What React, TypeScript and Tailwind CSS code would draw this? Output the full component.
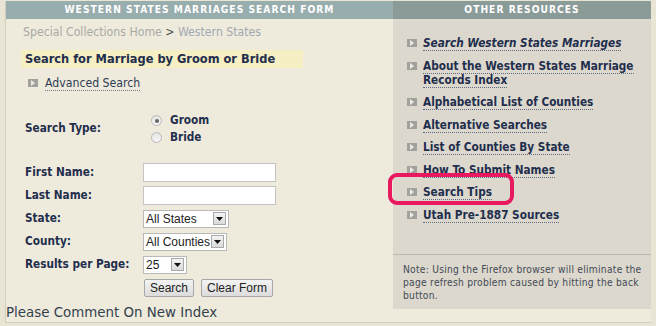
import React from "react";

const NAVY = "text-[#1f2e4c]";
const COND = "font-['DejaVu_Sans_Condensed','DejaVu_Sans',Tahoma,sans-serif]";

const LINKS: { label: string[]; italic?: boolean }[] = [
  { label: ["Search Western States Marriages"], italic: true },
  { label: ["About the Western States Marriage", "Records Index"] },
  { label: ["Alphabetical List of Counties"] },
  { label: ["Alternative Searches"] },
  { label: ["List of Counties By State"] },
  { label: ["How To Submit Names"] },
  { label: ["Search Tips"] },
  { label: ["Utah Pre-1887 Sources"] },
];

function Bullet() {
  return (
    <span className="mt-[3px] flex h-[8px] w-[10px] shrink-0 items-center justify-center bg-[#a3a19b]">
      <svg width="4" height="6" viewBox="0 0 4 6">
        <path d="M0 0 L4 3 L0 6 Z" fill="#ecebe6" />
      </svg>
    </span>
  );
}

function Select({ value, width }: { value: string; width: number }) {
  return (
    <div
      className="flex h-[18px] items-center justify-between border border-[#b9b9b9] bg-white pl-[2px] pr-[2px]"
      style={{ width }}
    >
      <span className="whitespace-nowrap font-['Liberation_Sans',Arial,sans-serif] text-[12px] leading-none text-[#222]">
        {value}
      </span>
      <span className="flex h-[13px] w-[13px] shrink-0 items-center justify-center border border-[#a9a9a9] bg-gradient-to-b from-[#f4f4f4] to-[#d9d9d9]">
        <svg width="7" height="4" viewBox="0 0 7 4">
          <path d="M0 0 H7 L3.5 4 Z" fill="#111" />
        </svg>
      </span>
    </div>
  );
}

function Button({ children, width }: { children: React.ReactNode; width: number }) {
  return (
    <div
      className="flex h-[18px] items-center justify-center rounded-[2px] border border-[#a7a7a7] bg-gradient-to-b from-[#f3f3f3] to-[#dcdcdc] font-['Liberation_Sans',Arial,sans-serif] text-[12px] leading-none text-[#222]"
      style={{ width }}
    >
      {children}
    </div>
  );
}

function Radio({ checked }: { checked?: boolean }) {
  return (
    <span className="flex h-[11px] w-[11px] items-center justify-center rounded-full border border-[#b8b8b8] bg-gradient-to-b from-[#e4e4e4] to-[#f8f8f8]">
      {checked && <span className="h-[4px] w-[4px] rounded-full bg-[#666]" />}
    </span>
  );
}

function Row({ label, children }: { label: string; children: React.ReactNode }) {
  return (
    <div className="flex h-[23px] items-center">
      <div className={`w-[118px] whitespace-nowrap ${COND} text-[11.7px] font-bold ${NAVY}`}>{label}</div>
      {children}
    </div>
  );
}

export default function App() {
  return (
    <div className="h-[326px] w-[656px] overflow-hidden bg-[#e9e5d5] pl-[5px] pt-[1px] font-['DejaVu_Sans',Verdana,sans-serif]">
      <div className="relative w-[646px] border-b border-l border-[#d2cebd] bg-[#efebdc]">
        {/* header */}
        <div className={`flex h-[18px] ${COND} text-[10.2px] font-bold uppercase leading-[18px] tracking-[0.1em] text-white`}>
          <div className="w-[387px] bg-[#98adad] text-center">Western States Marriages Search Form</div>
          <div className="flex-1 bg-[#8b9b98] text-center">Other Resources</div>
        </div>

        <div className="flex items-start">
          {/* left column */}
          <div className="w-[387px]">
            <div className={`pl-[17px] pt-[6px] ${COND} text-[12.2px] leading-[14px] text-[#a8a9a5]`}>
              Special Collections Home <span className="text-[#4a4f5a]">&gt;</span>{" "}
              <span className="text-[#a2a8b3]">Western States</span>
            </div>

            <div
              className={`ml-[15px] mt-[11px] h-[18px] w-[282px] bg-[#f6efc4] pl-[4px] ${COND} whitespace-nowrap text-[12.7px] font-bold leading-[18px] ${NAVY}`}
            >
              Search for Marriage by Groom or Bride
            </div>

            <div className="ml-[22px] mt-[8px] flex items-start gap-[7px]">
              <Bullet />
              <span className={`border-b border-dotted border-[#6b7890] ${COND} text-[12.2px] leading-[14px] text-[#2d3b57]`}>
                Advanced Search
              </span>
            </div>

            <div className="ml-[19px] mt-[24px]">
              <div className="flex items-center">
                <div className={`w-[119px] ${COND} text-[11.7px] font-bold ${NAVY}`}>Search Type:</div>
                <div className="flex flex-col gap-[6px] pl-[7px]">
                  <div className="flex items-center gap-[8px]">
                    <Radio checked />
                    <span className={`${COND} text-[11.7px] font-bold leading-[11px] ${NAVY}`}>Groom</span>
                  </div>
                  <div className="flex items-center gap-[8px]">
                    <Radio />
                    <span className={`${COND} text-[11.7px] font-bold leading-[11px] ${NAVY}`}>Bride</span>
                  </div>
                </div>
              </div>

              <div className="mt-[18px]">
                <Row label="First Name:">
                  <div className="h-[19px] w-[133px] border border-[#c4c4c4] bg-white" />
                </Row>
                <Row label="Last Name:">
                  <div className="h-[19px] w-[133px] border border-[#c4c4c4] bg-white" />
                </Row>
                <Row label="State:">
                  <Select value="All States" width={86} />
                </Row>
                <Row label="County:">
                  <Select value="All Counties" width={84} />
                </Row>
                <Row label="Results per Page:">
                  <Select value="25" width={44} />
                </Row>
                <div className="flex h-[23px] items-center gap-[7px] pl-[119px]">
                  <Button width={50}>Search</Button>
                  <Button width={72}>Clear Form</Button>
                </div>
              </div>
            </div>

            <div className="pb-[1px] pt-[6px] text-[13.4px] leading-[16px] text-[#33404e]">Please Comment On New Index</div>
          </div>

          {/* right column */}
          <div className="h-[290px] flex-1 bg-[#dcd8ce]">
            <ul className="h-[236px] border-b border-[#bdb9ae] pl-[14px] pt-[17px]">
              {LINKS.map((l) => (
                <li key={l.label[0]} className="mb-[8.5px] flex items-start gap-[6px]">
                  <Bullet />
                  <span className={`${COND} text-[11.7px] font-bold leading-[14px] ${NAVY} ${l.italic ? "italic" : ""}`}>
                    {l.label.map((t, i) => (
                      <React.Fragment key={i}>
                        <span className="border-b border-dotted border-[#5d6a82]">{t}</span>
                        {i < l.label.length - 1 && <br />}
                      </React.Fragment>
                    ))}
                  </span>
                </li>
              ))}
            </ul>
            <p className={`pl-[10px] pr-[3px] pt-[8px] ${COND} text-[10.2px] leading-[13px] tracking-[0.025em] text-[#434a55]`}>
              Note: Using the Firefox browser will eliminate the page refresh problem caused by hitting the back button.
            </p>
          </div>
        </div>

        {/* highlight around Search Tips */}
        <div className="pointer-events-none absolute left-[382px] top-[172px] h-[32px] w-[126px] rounded-[9px] border-[4px] border-[#e8195f]" />
      </div>
    </div>
  );
}
